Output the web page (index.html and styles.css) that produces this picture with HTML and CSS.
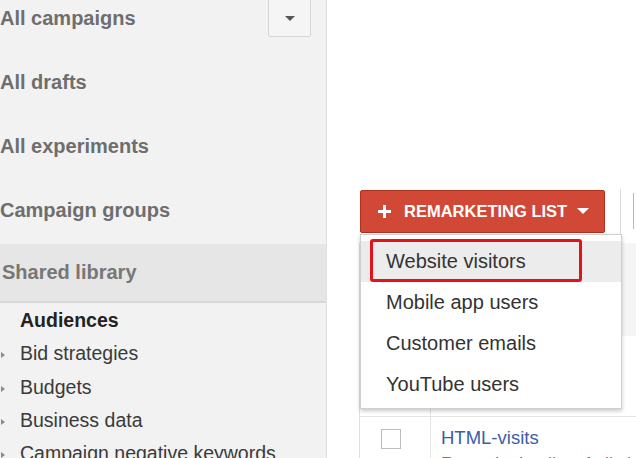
FILE: index.html
```html
<!DOCTYPE html>
<html>
<head>
<meta charset="utf-8">
<link rel="stylesheet" href="styles.css">
</head>
<body>
<div class="page">
  <aside class="sidebar">
    <div class="nav-item first">
      <span>All campaigns</span>
      <div class="toggle"><span class="tri"></span></div>
    </div>
    <div class="nav-item">All drafts</div>
    <div class="nav-item">All experiments</div>
    <div class="nav-item">Campaign groups</div>
    <div class="shared">Shared library</div>
    <ul class="sublist">
      <li class="active">Audiences</li>
      <li>Bid strategies</li>
      <li>Budgets</li>
      <li>Business data</li>
      <li>Campaign negative keywords</li>
    </ul>
  </aside>
  <main class="main">
    <div class="toolbar">
      <div class="btn-wrap">
        <button class="btn-red">
          <svg class="plus" width="13" height="13" viewBox="0 0 13 13"><path d="M5 0h3v5h5v3H8v5H5V8H0V5h5z" fill="#fff"/></svg>
          <span class="btn-label">REMARKETING LIST</span>
          <span class="caret"></span>
        </button>
        <div class="menu">
          <div class="menu-item hover">Website visitors</div>
          <div class="menu-item">Mobile app users</div>
          <div class="menu-item">Customer emails</div>
          <div class="menu-item">YouTube users</div>
          <div class="annot"></div>
        </div>
      </div>
      <div class="sep"></div>
      <div class="btn-next"></div>
    </div>
    <div class="table">
      <div class="thead"></div>
      <div class="row empty">
        <div class="cell-check"></div>
        <div class="cell-name"></div>
      </div>
      <div class="row">
        <div class="cell-check"><span class="checkbox"></span></div>
        <div class="cell-name">
          <a class="link">HTML-visits</a>
          <div class="desc">Remarketing list of all visitors</div>
        </div>
      </div>
    </div>
  </main>
</div>
</body>
</html>
```
FILE: styles.css
```css
html, body {
  margin: 0;
  padding: 0;
  width: 636px;
  height: 458px;
  overflow: hidden;
  background: #fff;
  font-family: "Liberation Sans", Arial, sans-serif;
}
.page {
  display: flex;
  height: 458px;
}
.sidebar {
  width: 326px;
  flex-shrink: 0;
  background: #f2f2f2;
  border-right: 1px solid #e0e0e0;
  overflow: hidden;
}
.nav-item {
  height: 64px;
  line-height: 64px;
  font-size: 20px;
  font-weight: bold;
  color: #6e6e6e;
  white-space: nowrap;
}
.nav-item.first {
  margin-top: -14px;
  display: flex;
  align-items: flex-start;
  justify-content: space-between;
  padding-right: 15px;
}
.toggle {
  width: 43px;
  height: 51px;
  border: 1px solid #d6d6d6;
  border-radius: 2px;
  background: #f5f5f5;
  display: flex;
  justify-content: center;
  padding-top: 29px;
  box-sizing: border-box;
}
.tri {
  width: 0;
  height: 0;
  border-left: 5px solid transparent;
  border-right: 5px solid transparent;
  border-top: 5px solid #555;
}
.shared {
  margin-top: 2px;
  height: 57px;
  line-height: 57px;
  padding-left: 2px;
  background: #e6e6e6;
  border-bottom: 2px solid #d8d8d8;
  font-size: 20px;
  font-weight: bold;
  color: #777;
}
.sublist {
  list-style: none;
  margin: 0;
  padding: 1px 0 0 0;
}
.sublist li {
  position: relative;
  padding-left: 20px;
  height: 33.3px;
  line-height: 33.3px;
  font-size: 19.5px;
  color: #3a3a3a;
  white-space: nowrap;
}
.sublist li::before {
  content: "";
  position: absolute;
  left: 1px;
  top: 15px;
  border-top: 3px solid transparent;
  border-bottom: 3px solid transparent;
  border-left: 4px solid #8a8a8a;
}
.sublist li.active {
  font-weight: bold;
  color: #222;
}
.sublist li.active::before {
  display: none;
}
.main {
  flex: 1;
  padding-left: 32px;
  overflow: hidden;
}
.toolbar {
  margin-top: 189px;
  display: flex;
  align-items: center;
  height: 44px;
}
.btn-wrap {
  position: relative;
}
.btn-red {
  margin-left: 1px;
  width: 245px;
  height: 43px;
  display: flex;
  align-items: center;
  padding: 0 0 0 17px;
  box-sizing: border-box;
  background: #d14836;
  border: 1px solid #b02f1e;
  border-radius: 2px;
  color: #fff;
  font-family: "Liberation Sans", Arial, sans-serif;
  font-size: 16.5px;
  font-weight: bold;
}
.plus {
  flex-shrink: 0;
}
.btn-label {
  margin-left: 13px;
}
.caret {
  margin-left: 10px;
  width: 0;
  height: 0;
  border-left: 6px solid transparent;
  border-right: 6px solid transparent;
  border-top: 6px solid #fff;
}
.menu {
  position: absolute;
  left: 1px;
  top: 44px;
  width: 262px;
  box-sizing: border-box;
  padding: 6px 0 3px;
  background: #fff;
  border: 1px solid #cfcfcf;
  box-shadow: 0 2px 4px rgba(0,0,0,0.22);
  z-index: 5;
}
.menu-item {
  height: 41px;
  line-height: 41px;
  padding-left: 25px;
  font-size: 20px;
  color: #333;
}
.menu-item.hover {
  background: #ececec;
}
.annot {
  position: absolute;
  left: 9px;
  top: 4px;
  width: 212px;
  height: 43px;
  box-sizing: border-box;
  border: 3px solid #e3121b;
  border-radius: 3px;
}
.sep {
  margin-left: 15px;
  width: 1px;
  height: 45px;
  background: #dedede;
}
.btn-next {
  margin-left: 13px;
  width: 10px;
  height: 36px;
  border-left: 1px solid #b8b8b8;
}
.table {
  margin-top: 10px;
  border-left: 1px solid #e0e0e0;
}
.thead {
  height: 93px;
  background: #f5f5f5;
}
.row {
  display: grid;
  grid-template-columns: 71px 1fr;
}
.row.empty {
  height: 80px;
  border-bottom: 1px solid #e4e4e4;
}
.cell-check {
  border-right: 1px solid #e4e4e4;
  padding-left: 21px;
  padding-top: 12px;
}
.checkbox {
  display: block;
  width: 18px;
  height: 18px;
  border: 1px solid #bdbdbd;
  background: #fff;
}
.cell-name {
  padding-left: 10px;
  padding-top: 10px;
}
.link {
  display: block;
  font-size: 18.5px;
  line-height: 22px;
  color: #3a5ea8;
}
.desc {
  margin-top: 4px;
  font-size: 18px;
  line-height: 22px;
  color: #777;
  white-space: nowrap;
}
```
